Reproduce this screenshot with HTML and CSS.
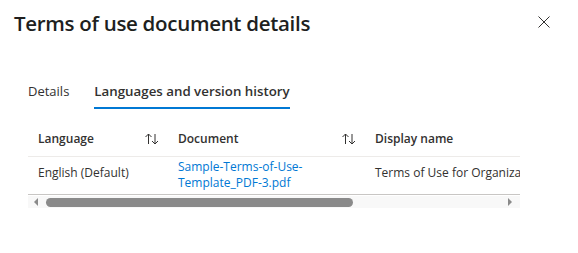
FILE: index.html
```html
<!DOCTYPE html>
<html lang="en">
<head>
    <meta charset="UTF-8">
    <meta name="viewport" content="width=device-width, initial-scale=1.0">
    <title>Terms of use document details</title>
    <link rel="stylesheet" href="styles.css">
</head>
<body>
    <div class="panel">
        <div class="panel-header">
            <h1 class="panel-title">Terms of use document details</h1>
            <button class="close-button" aria-label="Close">
                <svg width="12" height="12" viewBox="0 0 12 12">
                    <path d="M0.5 0.5 L11.5 11.5 M11.5 0.5 L0.5 11.5" stroke="#323130" stroke-width="1" fill="none"/>
                </svg>
            </button>
        </div>

        <div class="tabs">
            <button class="tab">Details</button>
            <button class="tab tab-active">Languages and version history</button>
        </div>

        <!-- Languages grid -->
        <div class="grid">
            <div class="grid-view">
                <div class="grid-row grid-head">
                    <div class="cell col-lang">
                        <span>Language</span>
                        <svg class="sort" width="16" height="14" viewBox="0 0 16 14">
                            <path d="M4.5 2 V12 M1.5 5 L4.5 2 L7.5 5 M11 2 V12 M8 9 L11 12 L14 9" stroke="#323130" stroke-width="1" fill="none"/>
                        </svg>
                    </div>
                    <div class="cell col-doc">
                        <span>Document</span>
                        <svg class="sort" width="16" height="14" viewBox="0 0 16 14">
                            <path d="M4.5 2 V12 M1.5 5 L4.5 2 L7.5 5 M11 2 V12 M8 9 L11 12 L14 9" stroke="#323130" stroke-width="1" fill="none"/>
                        </svg>
                    </div>
                    <div class="cell col-name">
                        <span>Display name</span>
                    </div>
                </div>
                <div class="grid-row grid-body">
                    <div class="cell col-lang">English (Default)</div>
                    <div class="cell col-doc">
                        <a class="doc-link" href="#">Sample-Terms-of-Use-<br>Template_PDF-3.pdf</a>
                    </div>
                    <div class="cell col-name">Terms of Use for Organization</div>
                </div>
            </div>
            <div class="scrollbar">
                <span class="scroll-arrow arrow-left"></span>
                <div class="scroll-track">
                    <div class="scroll-thumb"></div>
                </div>
                <span class="scroll-arrow arrow-right"></span>
            </div>
        </div>
    </div>
</body>
</html>
```

FILE: styles.css
```css
body {
    margin: 0;
    font-family: 'Open Sans', 'Noto Sans', sans-serif;
    color: #323130;
    background: #ffffff;
}

.panel {
    padding: 8px 28px 0 14px;
}

.panel-header {
    display: flex;
    justify-content: space-between;
    align-items: center;
    height: 28px;
}

.panel-title {
    margin: 1px 0 0;
    font-size: 20.5px;
    font-weight: 600;
    color: #201f1e;
    letter-spacing: -0.3px;
}

.close-button {
    background: none;
    border: none;
    padding: 0;
    width: 12px;
    height: 12px;
    display: flex;
    cursor: pointer;
}

.tabs {
    display: flex;
    gap: 25px;
    margin: 46px 0 0 14px;
}

.tab {
    background: none;
    border: none;
    padding: 0 0 7px;
    font-family: inherit;
    font-size: 13px;
    color: #323130;
    border-bottom: 2px solid transparent;
    cursor: pointer;
}

.tab-active {
    font-size: 13.3px;
    font-weight: 600;
    border-bottom-color: #0078d4;
}

/* Grid */
.grid {
    margin: 12px 0 0 14px;
    width: 492px;
}

.grid-view {
    overflow: hidden;
}

.grid-row {
    display: flex;
    width: 600px;
    font-size: 12px;
    border-bottom: 1px solid #edebe9;
}

.grid-row:last-child {
    border-bottom-color: #c8c6c4;
}

.grid-head {
    font-weight: 600;
}

.cell {
    display: flex;
    align-items: center;
    justify-content: space-between;
    padding: 0 8px 0 10px;
    box-sizing: border-box;
    flex-shrink: 0;
    height: 35px;
}

.grid-body .cell {
    height: 37px;
    padding-bottom: 6px;
}

.grid-body .col-doc {
    padding-bottom: 2px;
}

.col-lang {
    width: 140px;
}

.col-doc {
    width: 197px;
}

.col-name {
    width: 260px;
    white-space: nowrap;
}

.sort {
    margin-top: 1px;
}

.doc-link {
    color: #0078d4;
    text-decoration: none;
    line-height: 16px;
}

/* Scrollbar */
.scrollbar {
    display: flex;
    align-items: center;
    height: 12px;
    margin-top: 1px;
    background: #f8f8f8;
    padding: 0 6px;
    gap: 8px;
}

.scroll-track {
    flex: 1;
}

.scroll-thumb {
    width: 307px;
    height: 9px;
    border-radius: 5px;
    background: #8a8a8a;
}

.scroll-arrow {
    width: 0;
    height: 0;
    border-top: 4px solid transparent;
    border-bottom: 4px solid transparent;
}

.arrow-left {
    border-right: 4px solid #8a8a8a;
}

.arrow-right {
    border-left: 4px solid #8a8a8a;
    margin-right: 2px;
}
```
